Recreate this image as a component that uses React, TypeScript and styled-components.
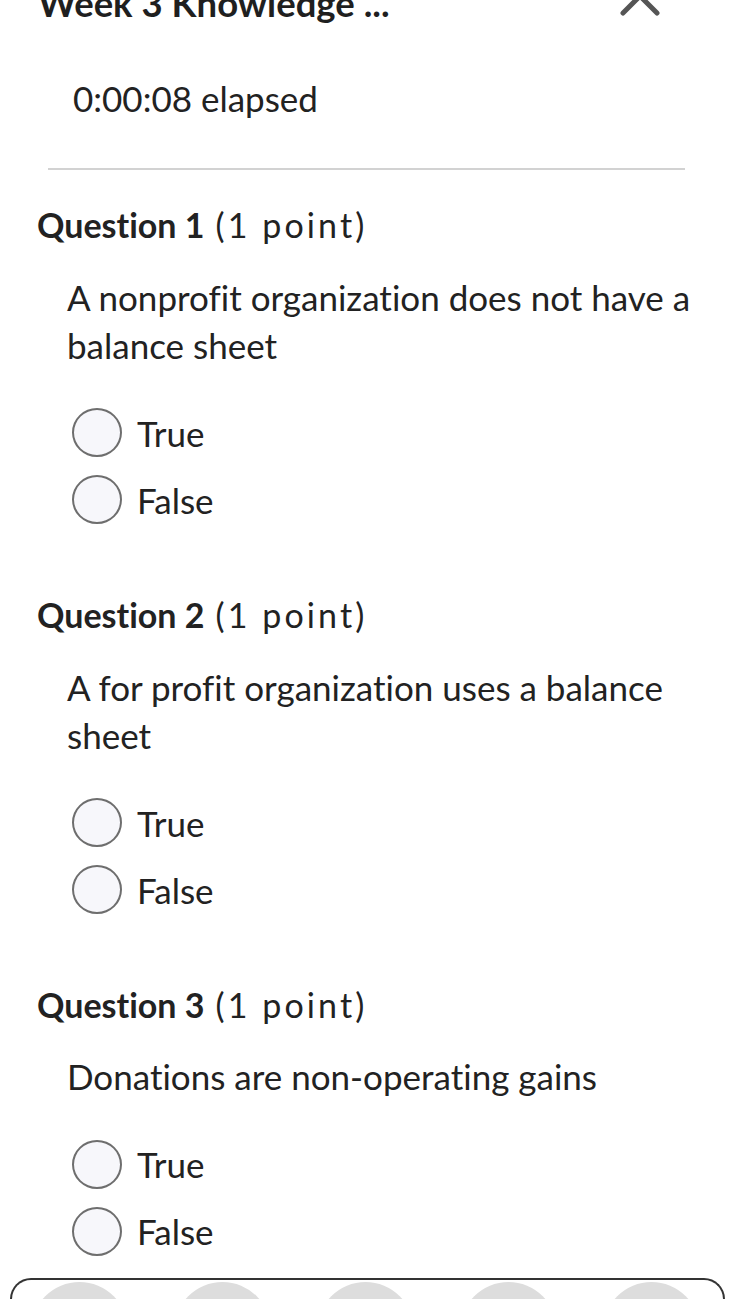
import React from "react";
import styled, { createGlobalStyle } from "styled-components";

const Global = createGlobalStyle`
  html, body { margin: 0; padding: 0; background: #ffffff; overflow: hidden; }
  body {
    font-family: Lato, "Noto Sans", sans-serif;
    color: #222222;
    font-variant-ligatures: none;
    font-feature-settings: "liga" 0, "clig" 0;
  }
  * { box-sizing: border-box; }
`;

const Page = styled.div`
  width: 729px;
  height: 1299px;
  overflow: hidden;
  display: flex;
  flex-direction: column;
`;

const Header = styled.header`
  display: flex;
  align-items: flex-start;
  justify-content: space-between;
  margin-top: -18px;
  padding: 0 67px 0 38px;
  height: 44px;
`;

const Title = styled.h1`
  margin: 0;
  font-size: 36.5px;
  line-height: 1.2;
  font-weight: 700;
  color: #1f1f1f;
`;

const ChevronIcon = styled.svg`
  width: 44px;
  height: 40px;
  flex: none;
`;

const Elapsed = styled.div`
  margin-top: 51px;
  padding-left: 73px;
  font-size: 35px;
  line-height: 1.2;
  color: #222;
`;

const Divider = styled.hr`
  border: none;
  height: 2px;
  background: #d2d2d2;
  margin: 49px 44px 0 48px;
`;

const Question = styled.section<{ $first?: boolean }>`
  display: flex;
  flex-direction: column;
  padding: 0 0 0 37px;
  margin-top: ${(p) => (p.$first ? "35px" : "70px")};
`;

const QTitle = styled.h2`
  margin: 0;
  font-size: 34px;
  line-height: 1.2;
  font-weight: 400;
  color: #222;
`;

const QLabel = styled.strong`
  font-weight: 700;
  margin-right: 11px;
`;

const QPoints = styled.span`
  font-weight: 400;
  letter-spacing: 3.1px;
`;

const Prompt = styled.p`
  margin: 27px 0 0 30px;
  font-size: 35px;
  line-height: 48px;
  color: #222;
`;

const Options = styled.div`
  display: flex;
  flex-direction: column;
  gap: 17px;
  margin: 39px 0 0 35px;
`;

const Option = styled.label`
  display: flex;
  align-items: center;
  gap: 15px;
  height: 50px;
  font-size: 35px;
  color: #222;
`;

const Radio = styled.span`
  width: 50px;
  height: 49px;
  border-radius: 50%;
  border: 2px solid #6e6e6e;
  background: #f7f7fb;
  flex: none;
`;

const BottomBar = styled.nav`
  margin: auto 4px 0 10px;
  height: 21px;
  border: 2px solid #333;
  border-bottom: none;
  border-radius: 53px 53px 0 0;
  display: flex;
  gap: 46px;
  padding: 2px 0 0 19px;
  overflow: hidden;
  flex: none;
`;

const Bubble = styled.span`
  width: 97px;
  height: 97px;
  border-radius: 50%;
  background: #dddddd;
  flex: none;
`;

const questions = [
  { n: 1, text: "A nonprofit organization does not have a balance sheet" },
  { n: 2, text: "A for profit organization uses a balance sheet" },
  { n: 3, text: "Donations are non-operating gains" },
];

export default function App() {
  return (
    <Page>
      <Global />
      <Header>
        <Title>Week 3 Knowledge ...</Title>
        <ChevronIcon viewBox="0 0 44 40">
          <polyline
            points="5,31 22,14 39,31"
            fill="none"
            stroke="#555"
            strokeWidth="5"
            strokeLinecap="round"
            strokeLinejoin="round"
          />
        </ChevronIcon>
      </Header>
      <Elapsed>0:00:08 elapsed</Elapsed>
      <Divider />
      {questions.map((q, i) => (
        <Question key={q.n} $first={i === 0}>
          <QTitle>
            <QLabel>Question {q.n}</QLabel>
            <QPoints>(1 point)</QPoints>
          </QTitle>
          <Prompt>{q.text}</Prompt>
          <Options>
            <Option>
              <Radio />
              True
            </Option>
            <Option>
              <Radio />
              False
            </Option>
          </Options>
        </Question>
      ))}
      <BottomBar>
        {[1, 2, 3, 4, 5].map((b) => (
          <Bubble key={b} />
        ))}
      </BottomBar>
    </Page>
  );
}
